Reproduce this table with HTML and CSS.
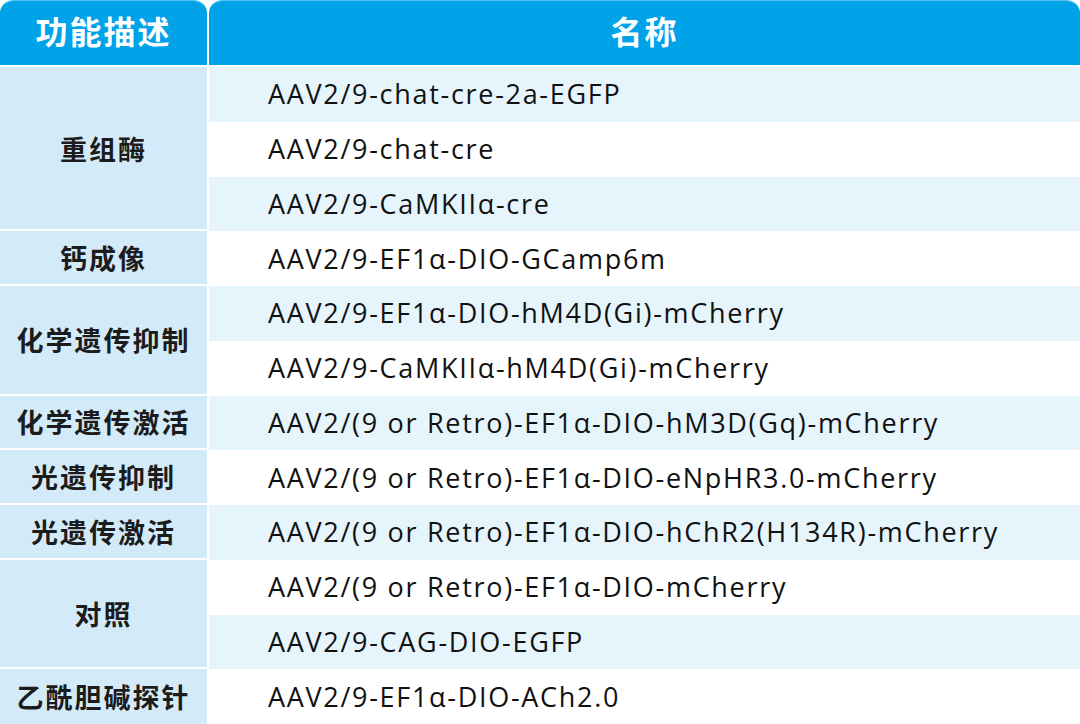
FILE: index.html
```html
<!DOCTYPE html>
<html lang="zh">
<head>
<meta charset="utf-8">
<link rel="stylesheet" href="styles.css">
</head>
<body>
<div class="table">
  <div class="th th-left">功能描述</div>
  <div class="th th-right">名称</div>

  <div class="cat span3">重组酶</div>
  <div class="name odd">AAV2/9-chat-cre-2a-EGFP</div>
  <div class="name">AAV2/9-chat-cre</div>
  <div class="name odd">AAV2/9-CaMKIIα-cre</div>

  <div class="cat">钙成像</div>
  <div class="name">AAV2/9-EF1α-DIO-GCamp6m</div>

  <div class="cat span2">化学遗传抑制</div>
  <div class="name odd">AAV2/9-EF1α-DIO-hM4D(Gi)-mCherry</div>
  <div class="name">AAV2/9-CaMKIIα-hM4D(Gi)-mCherry</div>

  <div class="cat">化学遗传激活</div>
  <div class="name odd">AAV2/(9 or Retro)-EF1α-DIO-hM3D(Gq)-mCherry</div>

  <div class="cat">光遗传抑制</div>
  <div class="name">AAV2/(9 or Retro)-EF1α-DIO-eNpHR3.0-mCherry</div>

  <div class="cat">光遗传激活</div>
  <div class="name odd">AAV2/(9 or Retro)-EF1α-DIO-hChR2(H134R)-mCherry</div>

  <div class="cat span2">对照</div>
  <div class="name">AAV2/(9 or Retro)-EF1α-DIO-mCherry</div>
  <div class="name odd">AAV2/9-CAG-DIO-EGFP</div>

  <div class="cat last">乙酰胆碱探针</div>
  <div class="name">AAV2/9-EF1α-DIO-ACh2.0</div>
</div>
</body>
</html>
```

FILE: styles.css
```css
html, body {
  margin: 0;
  padding: 0;
  background: #ffffff;
}

.table {
  width: 1080px;
  height: 724px;
  display: grid;
  grid-template-columns: 207px 1fr;
  grid-template-rows: 67px repeat(12, 1fr);
  column-gap: 2px;
  font-family: "Open Sans", "Noto Sans CJK SC", sans-serif;
}

.th {
  box-sizing: border-box;
  background: #00a2e8;
  border-top: 1px solid #55c0f0;
  border-bottom: 2px solid #ffffff;
  background-clip: padding-box;
  border-radius: 13px 13px 0 0;
  color: #ffffff;
  font-family: "Noto Sans CJK SC", sans-serif;
  font-weight: 700;
  font-size: 32px;
  letter-spacing: 2px;
  display: flex;
  align-items: center;
  justify-content: center;
  padding-bottom: 6px;
}

.cat {
  grid-column: 1;
  box-sizing: border-box;
  background: #d3ebf8;
  border-bottom: 2px solid #ffffff;
  background-clip: padding-box;
  display: flex;
  align-items: center;
  justify-content: center;
  font-family: "Noto Sans CJK SC", sans-serif;
  font-weight: 700;
  font-size: 27px;
  letter-spacing: 2px;
  color: #1c1c1c;
}

.cat.last {
  border-bottom: 0;
}

.span2 {
  grid-row: span 2;
}

.span3 {
  grid-row: span 3;
}

.name {
  grid-column: 2;
  display: flex;
  align-items: center;
  padding-left: 59px;
  padding-bottom: 1px;
  font-size: 27px;
  letter-spacing: 1.7px;
  color: #111111;
  background: #ffffff;
  white-space: nowrap;
}

.name.odd {
  background: #e6f4fc;
}
```
